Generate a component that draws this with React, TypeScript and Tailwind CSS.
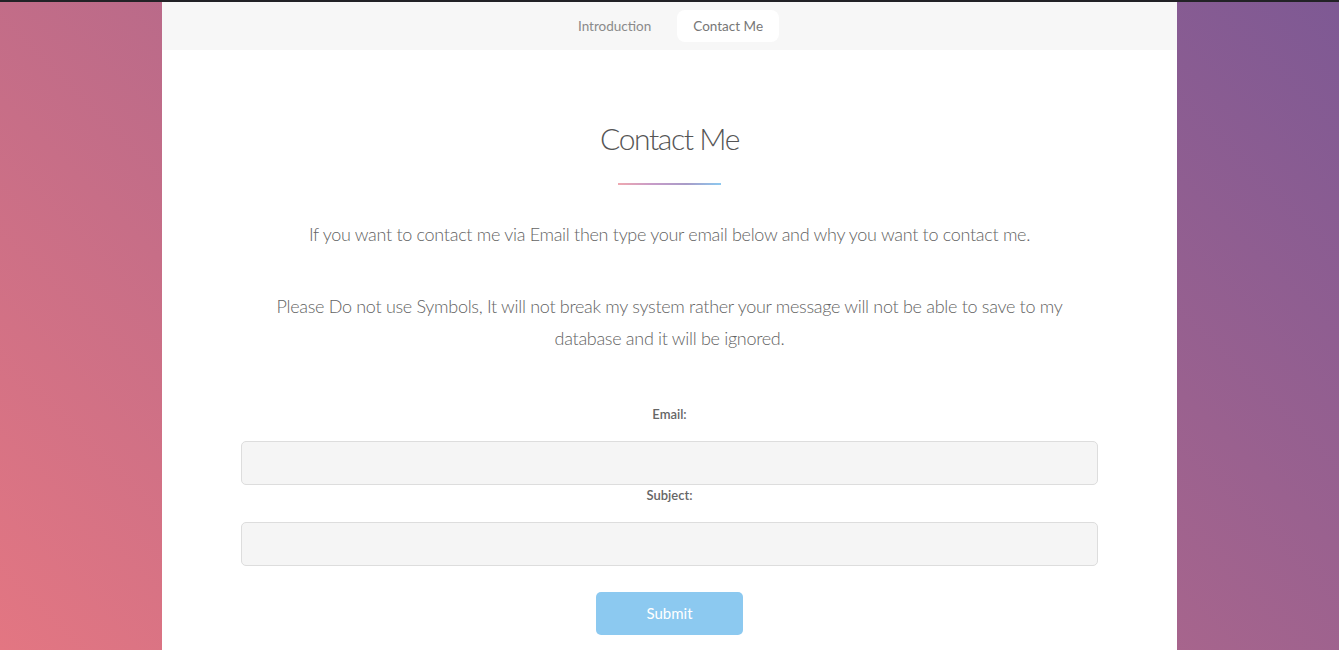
export default function App() {
  return (
    <div className="min-h-[650px] w-full border-t-2 border-[#222226] bg-[linear-gradient(45deg,#e37682_0%,#7e5994_100%)] font-['Lato',sans-serif] text-[#636363]">
      <div className="mx-auto w-[1015px] min-h-[648px] bg-white">
        <nav className="flex h-12 items-center justify-center gap-[8px] bg-[#f7f7f7] text-[13.5px] text-[#8a8a8a]">
          <a className="flex h-8 items-center rounded-lg px-[18px]">Introduction</a>
          <a className="flex h-8 items-center rounded-lg bg-white px-[16px] text-[#777]">Contact Me</a>
        </nav>

        <section className="flex flex-col items-center px-[79px]">
          <h2 className="mt-[67px] text-[30px] font-light leading-[42px] tracking-[-1.4px] text-[#555]">Contact Me</h2>
          <div className="mt-[24px] h-[2px] w-[103px] bg-[linear-gradient(90deg,#efa8b0,#c79cc8,#a89cc8,#8cc9f0)]" />

          <p className="mt-[33px] text-center text-[18px] font-light leading-8 tracking-[-0.3px]">
            If you want to contact me via Email then type your email below and why you want to contact me.
          </p>
          <p className="mt-10 max-w-[820px] text-center text-[18px] font-light leading-8 tracking-[-0.3px]">
            Please Do not use Symbols, It will not break my system rather your message will not be able to save to my database and it will be ignored.
          </p>

          <form className="mt-[50px] flex w-full flex-col items-center">
            <label className="h-5 text-[13px] font-semibold leading-5 text-[#666]">Email:</label>
            <input className="mt-[17px] h-[44px] w-full rounded-[5px] border border-[#dddddd] bg-[#f5f5f5]" />
            <label className="h-5 text-[13px] font-semibold leading-5 text-[#666]">Subject:</label>
            <input className="mt-[17px] h-[44px] w-full rounded-[5px] border border-[#dddddd] bg-[#f5f5f5]" />
            <button
              type="button"
              className="mt-[26px] h-[43px] w-[147px] rounded-[5px] bg-[#8cc9f0] text-[15px] text-white"
            >
              Submit
            </button>
          </form>
        </section>
      </div>
    </div>
  );
}
